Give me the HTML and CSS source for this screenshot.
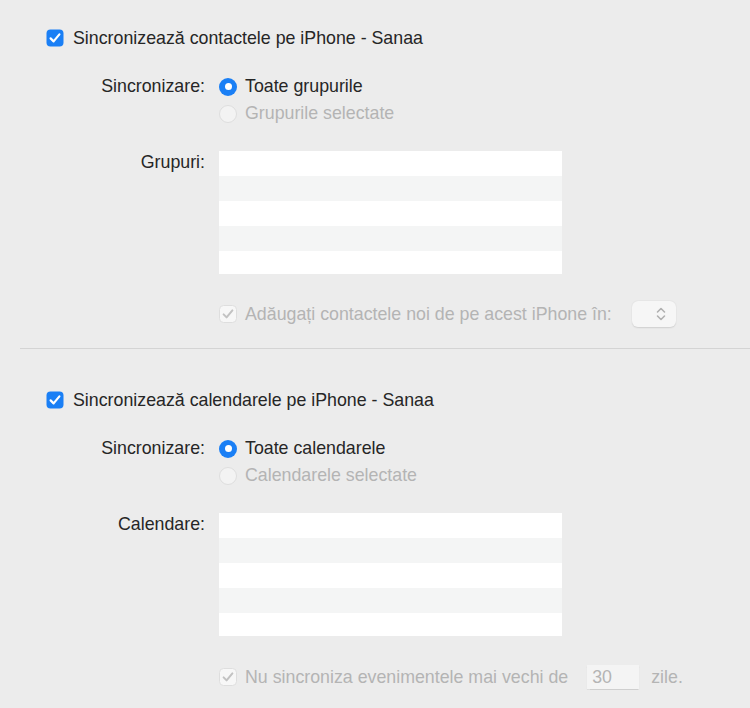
FILE: index.html
```html
<!DOCTYPE html>
<html lang="ro">
<head>
<meta charset="utf-8">
<link rel="stylesheet" href="styles.css">
</head>
<body>
<div class="page">
  <section class="sync sync-first">
    <div class="title">
      <span class="cb cb-on"><svg viewBox="0 0 18 18" width="18" height="18"><rect x="0.5" y="0.5" width="17" height="17" rx="4" fill="#1a7ff5"/><path d="M4.6 9.4 L7.6 12.4 L13.4 5.4" fill="none" stroke="#fff" stroke-width="2.2" stroke-linecap="round" stroke-linejoin="round"/></svg></span>
      <span>Sincronizează contactele pe iPhone - Sanaa</span>
    </div>
    <div class="form">
      <div class="lbl">Sincronizare:</div>
      <div class="radios">
        <div class="radio"><span class="rb rb-on"></span><span>Toate grupurile</span></div>
        <div class="radio dis"><span class="rb rb-dis"></span><span>Grupurile selectate</span></div>
      </div>
      <div class="lbl lbl-list">Grupuri:</div>
      <div class="list"><div class="row"></div><div class="row alt"></div><div class="row"></div><div class="row alt"></div><div class="row last"></div></div>
      <div class="spacer"></div>
      <div class="opt dis">
        <span class="cb"><svg viewBox="0 0 18 18" width="18" height="18"><rect x="0.5" y="0.5" width="17" height="17" rx="4" fill="#f7f7f7" stroke="#dedede"/><path d="M4.6 9.4 L7.6 12.4 L13.4 5.4" fill="none" stroke="#c2c2c2" stroke-width="2" stroke-linecap="round" stroke-linejoin="round"/></svg></span>
        <span>Adăugați contactele noi de pe acest iPhone în:</span>
        <span class="popup"><svg viewBox="0 0 10 16" width="10" height="16"><path d="M1.5 6 L5 2.5 L8.5 6 M1.5 10 L5 13.5 L8.5 10" fill="none" stroke="#b0b0b0" stroke-width="1.6" stroke-linecap="round" stroke-linejoin="round"/></svg></span>
      </div>
    </div>
  </section>
  <div class="sep"></div>
  <section class="sync sync-second">
    <div class="title">
      <span class="cb cb-on"><svg viewBox="0 0 18 18" width="18" height="18"><rect x="0.5" y="0.5" width="17" height="17" rx="4" fill="#1a7ff5"/><path d="M4.6 9.4 L7.6 12.4 L13.4 5.4" fill="none" stroke="#fff" stroke-width="2.2" stroke-linecap="round" stroke-linejoin="round"/></svg></span>
      <span>Sincronizează calendarele pe iPhone - Sanaa</span>
    </div>
    <div class="form">
      <div class="lbl">Sincronizare:</div>
      <div class="radios">
        <div class="radio"><span class="rb rb-on"></span><span>Toate calendarele</span></div>
        <div class="radio dis"><span class="rb rb-dis"></span><span>Calendarele selectate</span></div>
      </div>
      <div class="lbl lbl-list">Calendare:</div>
      <div class="list"><div class="row"></div><div class="row alt"></div><div class="row"></div><div class="row alt"></div><div class="row last"></div></div>
      <div class="spacer"></div>
      <div class="opt dis opt-days">
        <span class="cb"><svg viewBox="0 0 18 18" width="18" height="18"><rect x="0.5" y="0.5" width="17" height="17" rx="4" fill="#f7f7f7" stroke="#dedede"/><path d="M4.6 9.4 L7.6 12.4 L13.4 5.4" fill="none" stroke="#c2c2c2" stroke-width="2" stroke-linecap="round" stroke-linejoin="round"/></svg></span>
        <span>Nu sincroniza evenimentele mai vechi de</span>
        <span class="days">30</span>
        <span class="unit">zile.</span>
      </div>
    </div>
  </section>
</div>
</body>
</html>
```

FILE: styles.css
```css
html, body {
  margin: 0;
  padding: 0;
  background: #ececec;
}
body {
  font-family: "Liberation Sans", Arial, sans-serif;
  font-size: 17.8px;
  color: #262626;
  width: 750px;
  height: 708px;
  overflow: hidden;
}
.page {
  display: flex;
  flex-direction: column;
}
.sync-first { padding-top: 27px; }
.sync-second { padding-top: 40px; }
.title {
  display: flex;
  align-items: center;
  gap: 9px;
  height: 22px;
  padding-left: 46px;
}
.cb {
  display: flex;
  width: 18px;
  height: 18px;
  flex: none;
}
.form {
  display: grid;
  grid-template-columns: 205px 1fr;
  column-gap: 14px;
  margin-top: 24px;
}
.lbl {
  text-align: right;
  line-height: 27px;
}
.radios {
  display: flex;
  flex-direction: column;
}
.radio {
  display: flex;
  align-items: center;
  gap: 8px;
  height: 27px;
}
.rb {
  width: 18px;
  height: 18px;
  border-radius: 50%;
  box-sizing: border-box;
  flex: none;
}
.rb-on {
  background: #1a7ff5;
  display: flex;
  align-items: center;
  justify-content: center;
}
.rb-on::after {
  content: "";
  width: 7px;
  height: 7px;
  border-radius: 50%;
  background: #fff;
}
.rb-dis {
  background: #f3f3f3;
  border: 1px solid #dedede;
}
.dis { color: #b4b4b4; }
.lbl-list {
  margin-top: 24px;
  line-height: 22px;
}
.list {
  margin-top: 24px;
  width: 343px;
  display: flex;
  flex-direction: column;
  background: #fff;
}
.row { height: 25px; background: #fff; }
.row.alt { background: #f4f5f5; }
.row.last { height: 23px; }
.spacer { height: 26px; }
.opt {
  margin-top: 27px;
  display: flex;
  align-items: center;
  gap: 8px;
  height: 26px;
}
.popup {
  margin-left: 12px;
  width: 44px;
  height: 26px;
  box-sizing: border-box;
  border-radius: 6px;
  background: #f6f6f6;
  box-shadow: 0 0.5px 1.5px rgba(0, 0, 0, 0.12);
  display: flex;
  align-items: center;
  justify-content: flex-end;
  padding-right: 10px;
}
.opt-days { margin-top: 28px; }
.days {
  margin-left: 11px;
  width: 52px;
  height: 24px;
  line-height: 24px;
  box-sizing: border-box;
  padding-left: 5px;
  background: #f4f4f4;
  box-shadow: 0 0.5px 1px rgba(0, 0, 0, 0.12);
}
.unit { margin-left: 4px; }
.sep {
  margin-top: 21px;
  margin-left: 20px;
  height: 1px;
  background: #d4d4d4;
}
```
